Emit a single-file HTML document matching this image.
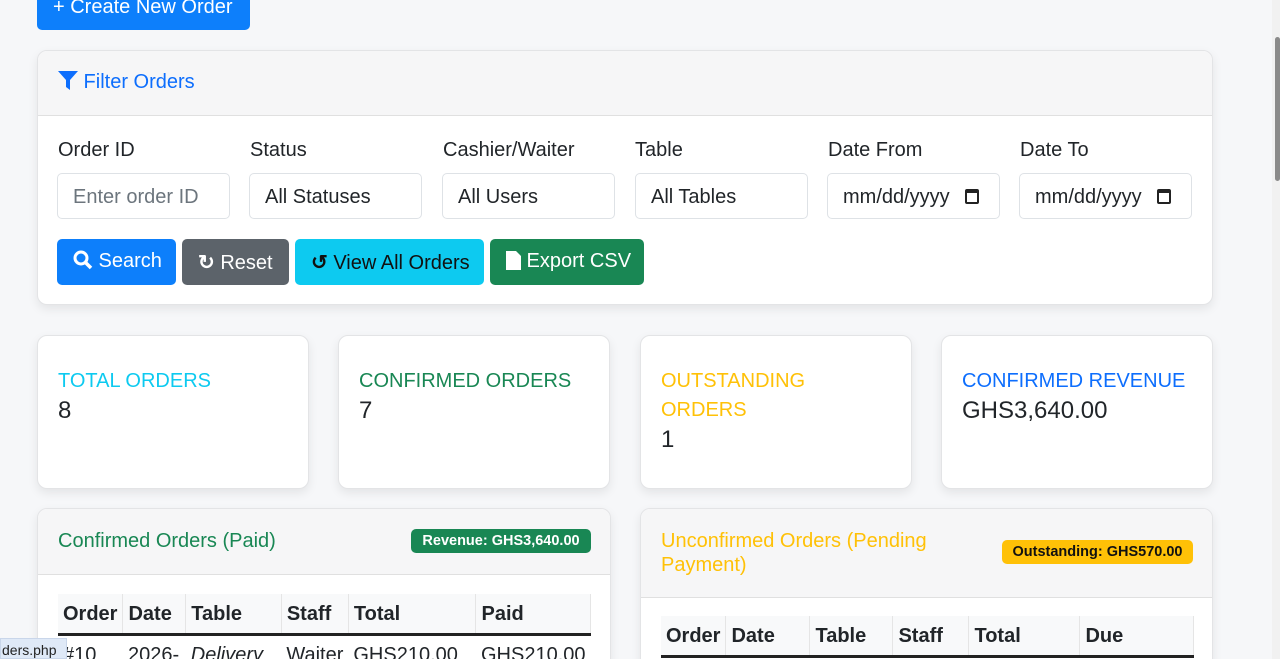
<!DOCTYPE html>
<html style="height:659px;overflow:hidden"><head><style>
*{box-sizing:border-box;margin:0;padding:0}
body{width:1280px;height:659px;overflow:hidden;background:#f6f7f9;font-family:"Liberation Sans",sans-serif;color:#212529;position:relative}
.a{position:absolute}
.card{position:absolute;background:#fff;border:1px solid #e3e4e6;border-radius:10px;box-shadow:0 4px 10px rgba(0,0,0,.08);overflow:hidden}
.hd{background:#f6f6f7;border-bottom:1px solid #e0e0e0;position:absolute;left:0;right:0;top:0}
.lbl{position:absolute;font-size:20px;top:139px}
.inp{position:absolute;top:173px;height:46px;width:173px;border:1px solid #dee2e6;border-radius:5px;font-size:20px;padding:12px 15px;background:#fff}
.btn{position:absolute;top:239px;height:46px;border-radius:5px;font-size:20px;color:#fff;padding:11px 16px;white-space:nowrap}
.st{font-size:20px;position:absolute;left:20px;top:31px;line-height:29px}
.sv{font-size:24px}
table{position:absolute;border-collapse:collapse;font-size:20px}
th{font-weight:bold;text-align:left;padding:2px 5px 0;height:40px;border-right:1px solid #e5e5e5;border-bottom:3px solid #222;background:#f8f9fa}
td{padding:8px 5px;white-space:nowrap}
.cal{display:inline-block;width:14px;height:15px;border:2px solid #222;border-top-width:4px;border-radius:2px;position:absolute;right:20px;top:15px}
</style></head><body>
<div class="a" style="left:37px;top:-12px;width:213px;height:42px;background:#0d7ffb;border-radius:0 0 5px 5px;color:#fff;font-size:20px;padding:8px 0 0 16px">+ Create New Order</div>

<div class="card" style="left:37px;top:50px;width:1176px;height:255px">
 <div class="hd" style="height:65px"><div class="a" style="left:20px;top:20px;color:#0d6efd;font-size:20px"><svg width="20" height="19" viewBox="0 0 20 19" style="vertical-align:-2px"><path d="M0 0H20L12 9V19L8 16V9Z" fill="#0d6efd"/></svg> Filter Orders</div></div>
</div>
<div class="lbl" style="left:58px">Order ID</div>
<div class="lbl" style="left:250px">Status</div>
<div class="lbl" style="left:443px">Cashier/Waiter</div>
<div class="lbl" style="left:635px">Table</div>
<div class="lbl" style="left:828px">Date From</div>
<div class="lbl" style="left:1020px">Date To</div>
<div class="inp" style="left:57px;color:#6c757d">Enter order ID</div>
<div class="inp" style="left:249px">All Statuses</div>
<div class="inp" style="left:442px">All Users</div>
<div class="inp" style="left:635px">All Tables</div>
<div class="inp" style="left:827px">mm/dd/yyyy<span class="cal"></span></div>
<div class="inp" style="left:1019px">mm/dd/yyyy<span class="cal"></span></div>
<div class="btn" style="left:57px;width:119px;background:#0d7ffb"><svg width="20" height="20" viewBox="0 0 20 20" style="vertical-align:-3px"><circle cx="8" cy="8" r="6" stroke="#fff" stroke-width="3" fill="none"/><path d="M12 12L18 18" stroke="#fff" stroke-width="3.5"/></svg> Search</div>
<div class="btn" style="left:182px;width:107px;background:#5c636a"><b>&#x21bb;</b> Reset</div>
<div class="btn" style="left:295px;width:189px;background:#0dcaf0;color:#111"><b>&#x21ba;</b> View All Orders</div>
<div class="btn" style="left:490px;width:154px;background:#198754"><svg width="15" height="19" viewBox="0 0 15 19" style="vertical-align:-3px"><path d="M0 0H10L15 5V19H0Z" fill="#fff"/></svg> Export CSV</div>

<div class="card" style="left:37px;top:335px;width:272px;height:154px"><div class="st"><span style="color:#0dcaf0">TOTAL ORDERS</span><br><span class="sv">8</span></div></div>
<div class="card" style="left:338px;top:335px;width:272px;height:154px"><div class="st"><span style="color:#198754">CONFIRMED ORDERS</span><br><span class="sv">7</span></div></div>
<div class="card" style="left:640px;top:335px;width:272px;height:154px"><div class="st"><span style="color:#ffc107">OUTSTANDING<br>ORDERS</span><br><span class="sv">1</span></div></div>
<div class="card" style="left:941px;top:335px;width:272px;height:154px"><div class="st"><span style="color:#0d6efd">CONFIRMED REVENUE</span><br><span class="sv">GHS3,640.00</span></div></div>

<div class="card" style="left:37px;top:508px;width:574px;height:170px">
 <div class="hd" style="height:66px"><div class="a" style="left:20px;top:21px;color:#198754;font-size:20px">Confirmed Orders (Paid)</div>
 <div class="a" style="left:373px;top:20px;width:180px;text-align:center;background:#198754;color:#fff;font-weight:bold;font-size:14.5px;padding:4px 0;border-radius:5px">Revenue: GHS3,640.00</div></div>
 <table style="left:20px;top:85px;width:533px"><tr><th style="width:63px">Order</th><th style="width:63px">Date</th><th style="width:97px">Table</th><th style="width:67px">Staff</th><th style="width:129px">Total</th><th>Paid</th></tr>
 <tr><td>#10</td><td>2026-</td><td><i>Delivery</i></td><td>Waiter</td><td>GHS210.00</td><td>GHS210.00</td></tr></table>
</div>
<div class="card" style="left:640px;top:508px;width:573px;height:170px">
 <div class="hd" style="height:89px"><div class="a" style="left:20px;top:20px;color:#ffc107;font-size:20px;line-height:24px">Unconfirmed Orders (Pending<br>Payment)</div>
 <div class="a" style="left:361px;top:31px;width:191px;text-align:center;background:#ffc107;color:#111;font-weight:bold;font-size:14.5px;padding:4px 0;border-radius:5px">Outstanding: GHS570.00</div></div>
 <table style="left:20px;top:107px;width:533px"><tr><th style="width:63px">Order</th><th style="width:84px">Date</th><th style="width:83px">Table</th><th style="width:76px">Staff</th><th style="width:111px">Total</th><th>Due</th></tr></table>
</div>

<div class="a" style="left:0;top:638px;width:67px;height:21px;background:#dfe9f7;border:1px solid #c9d6ea;font-size:14px;padding:3px 0 0 1px;color:#222">ders.php</div>
<div class="a" style="left:1272px;top:0;width:8px;height:659px;background:#f1f1f1"></div>
<div class="a" style="left:1275px;top:37px;width:5px;height:144px;background:#8a8a8a;border-radius:3px"></div>
</body></html>
